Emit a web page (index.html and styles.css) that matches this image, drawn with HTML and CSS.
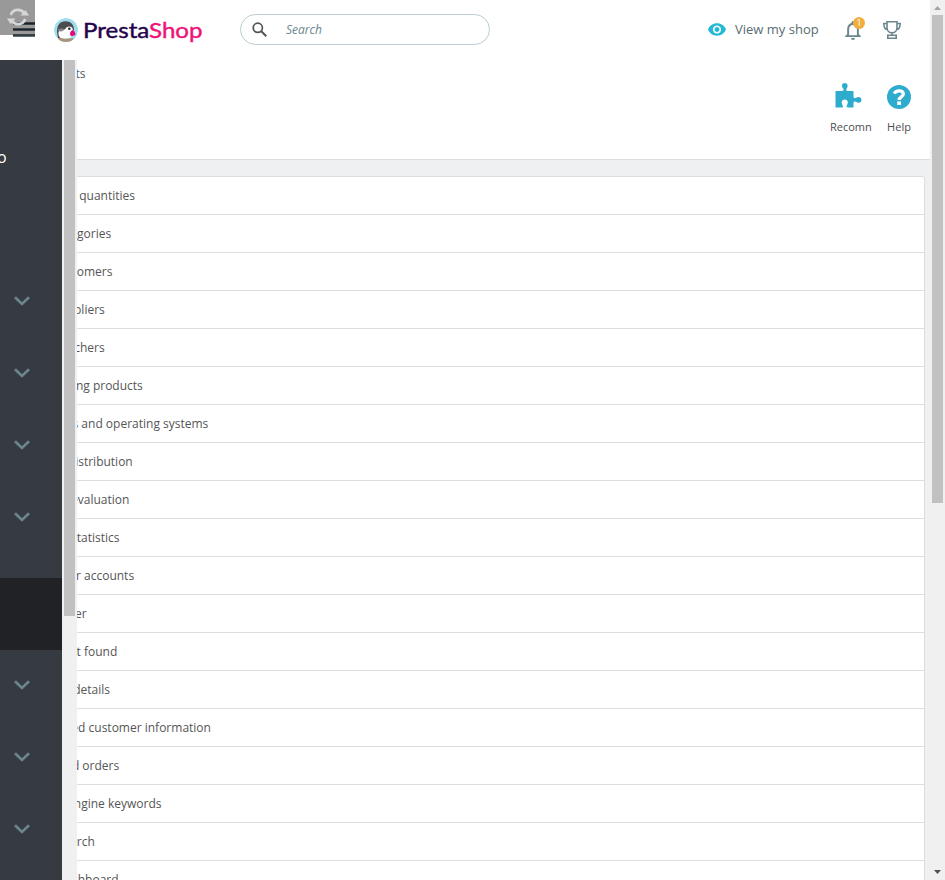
FILE: index.html
```html
<!DOCTYPE html>
<html lang="en">
<head>
<meta charset="utf-8">
<title>Stats • PrestaShop</title>
<link rel="stylesheet" href="styles.css">
</head>
<body>
<div class="viewport">
  <div class="page">
    <header class="topbar">
      <svg class="menu" viewBox="0 0 22 15"><path d="M0 1.500h22M0 7.500h22M0 13.500h22" stroke="#6c868e" stroke-width="3"/><path d="M0 1.500h22M0 7.500h22M0 13.500h22" stroke="#363a41" stroke-width="1.400"/></svg>
      <svg class="logo" viewBox="0 0 150 26">
        <defs><clipPath id="disc"><circle cx="12" cy="12" r="12"/></clipPath></defs>
        <g clip-path="url(#disc)">
          <circle cx="12" cy="12" r="12" fill="#9fdcec"/>
          <path d="M3 14C3 7 6 3.300 11.500 3.300c5 0 8.500 3 8.500 8.700l-3 3-8 6-5-1z" fill="#4b4b50"/>
          <path d="M4.500 14c1-2.500 4-3 6.500-2.500 1-2.500 4.500-4 7-2 1 1 1 3 .5 4.500l-2 6-8 1c-3-1-4.500-3.500-4-7z" fill="#fff"/>
          <path d="M4 11.500c2-1 4-1.500 6.500-.5-.5 2-2.500 2.800-6 2.300z" fill="#88888c"/>
          <circle cx="15.300" cy="10.800" r="1.300" fill="#2b2b30"/>
          <path d="M18.300 12c2 .8 3.200 2.500 3.200 5-1.500 0-2.500 1.300-4.500 1-1.700-1.500-1-4.500 1.300-6z" fill="#e5087e"/>
          <path d="M4 20.500c3-1.500 6 .5 8 .3 2 .2 5-1.300 8-.3l-3 5H6z" fill="#a9937c"/>
        </g>
        <text class="logo-text" x="29" y="19.500" textLength="119.500" lengthAdjust="spacingAndGlyphs"><tspan fill="#26044d" stroke="#26044d">Presta</tspan><tspan fill="#ee1477" stroke="#ee1477">Shop</tspan></text>
      </svg>
      <div class="search">
        <svg class="search-icon" viewBox="0 0 16 16"><circle cx="5.800" cy="5.800" r="4.600" fill="none" stroke="#555" stroke-width="1.700"/><path d="M9.300 9.300l5 5" stroke="#555" stroke-width="2"/></svg>
        <span>Search</span>
      </div>
      <div class="view-shop">
        <svg class="eye" viewBox="1 4.500 22 15"><path fill="#25b9d7" d="M12 4.500C7 4.500 2.730 7.610 1 12c1.730 4.390 6 7.500 11 7.500s9.270-3.110 11-7.500c-1.730-4.390-6-7.500-11-7.500zM12 17c-2.760 0-5-2.240-5-5s2.240-5 5-5 5 2.240 5 5-2.240 5-5 5zm0-8c-1.660 0-3 1.340-3 3s1.340 3 3 3 3-1.340 3-3-1.340-3-3-3z"/></svg>
        <span>View my shop</span>
      </div>
      <div class="bell">
        <svg viewBox="4 2.500 16 19.500"><path fill="#6c868e" d="M12 22c1.100 0 2-.9 2-2h-4c0 1.100.9 2 2 2zm6-6v-5c0-3.070-1.630-5.640-4.500-6.320V4c0-.83-.67-1.500-1.500-1.500s-1.500.67-1.500 1.500v.68C7.640 5.360 6 7.920 6 11v5l-2 2v1h16v-1l-2-2zm-2 1H8v-6c0-2.480 1.510-4.500 4-4.500s4 2.020 4 4.500v6z"/></svg>
        <span class="badge">1</span>
      </div>
      <svg class="trophy" viewBox="0 0 18 18" fill="none" stroke="#6c868e" stroke-width="1.600"><path d="M4 .8h10v6c0 3-2.200 5-5 5s-5-2-5-5zM4 2.500H.8C.8 6 2.500 8.500 5 8.700M14 2.500h3.200c0 3.500-1.700 6-4.200 6.200M9 11.500v2.500M4.800 14.300h8.400v2.900H4.800z"/></svg>
      <div class="reload"><svg viewBox="0 0 22 18" fill="none" stroke="#d6d6d6" stroke-width="2.600"><path d="M3.800 7C4.800 4 7.500 1.900 11 1.900c2.600 0 4.800 1.200 6.200 3.300M18.200 11c-1 3-3.700 5.100-7.200 5.100-2.600 0-4.800-1.200-6.200-3.300"/><path d="M13.500 7.500H22l-3.500-5.500zM0 10.500h8.500L3.500 16z" fill="#d6d6d6" stroke="none"/></svg></div>
    </header>
    <section class="page-head">
      <div class="crumb"><span>Stats</span></div>
      <div class="actions">
        <div class="action recommended"><svg class="puzzle" viewBox="0 0 26 25"><path fill="#2eacce" d="M0 8h6c2 0 2.500-.8 1.800-2.200C5.500 3 6.500 0 9.300 0s3.800 3 1.800 5.800C10.300 7.400 11 8 12.500 8H18v5.500c0 1.500 1 2.200 2.500 1.300C23 13 26 14 26 16.800s-3 3.800-5.500 2C19 18 18 18.500 18 20v4.500h-5.500c-1.500 0-1.800-1-1-2.300 1.500-2.500 1-5.700-2.200-5.700s-3.700 3.200-2.200 5.700c.8 1.400.4 2.300-1.100 2.300H0z"/></svg><span>Recomn</span></div>
        <div class="action"><svg class="help" viewBox="0 0 24 24"><circle cx="12" cy="12" r="12" fill="#2eacce"/><path d="M7.300 8.600C8.200 6.700 9.800 5.900 12 5.900c2.700 0 4.300 1.200 4.300 3.100 0 3-4.200 2.700-4.200 6" fill="none" stroke="#fff" stroke-width="3.300"/><path d="M10.200 16.400h3.800V20h-3.800z" fill="#fff"/></svg><span>Help</span></div>
      </div>
    </section>
    <main class="content">
      <ul class="modules">
        <li>Available quantities</li>
        <li>Best categories</li>
        <li>Best customers</li>
        <li>Best suppliers</li>
        <li>Best vouchers</li>
        <li>Best-selling products</li>
        <li>Browsers and operating systems</li>
        <li>Carrier distribution</li>
        <li>Catalog evaluation</li>
        <li>Catalog statistics</li>
        <li>Customer accounts</li>
        <li>Newsletter</li>
        <li>Pages not found</li>
        <li>Product details</li>
        <li>Registered customer information</li>
        <li>Sales and orders</li>
        <li>Search engine keywords</li>
        <li>Shop search</li>
        <li>Stats Dashboard</li>
      </ul>
    </main>
  </div>
  <aside class="drawer">
    <nav class="nav">
      <div class="shop-name">o</div>
      <div class="item"><svg class="chev" viewBox="0 0 16 10"><path d="M1 1.300l7 6.700 7-6.700"/></svg></div>
      <div class="item"><svg class="chev" viewBox="0 0 16 10"><path d="M1 1.300l7 6.700 7-6.700"/></svg></div>
      <div class="item"><svg class="chev" viewBox="0 0 16 10"><path d="M1 1.300l7 6.700 7-6.700"/></svg></div>
      <div class="item"><svg class="chev" viewBox="0 0 16 10"><path d="M1 1.300l7 6.700 7-6.700"/></svg></div>
      <div class="item current"></div>
      <div class="item"><svg class="chev" viewBox="0 0 16 10"><path d="M1 1.300l7 6.700 7-6.700"/></svg></div>
      <div class="item"><svg class="chev" viewBox="0 0 16 10"><path d="M1 1.300l7 6.700 7-6.700"/></svg></div>
      <div class="item"><svg class="chev" viewBox="0 0 16 10"><path d="M1 1.300l7 6.700 7-6.700"/></svg></div>
    </nav>
    <div class="drawer-scroll"><div class="drawer-thumb"></div></div>
  </aside>
  <div class="scrollbar">
    <svg viewBox="0 0 15 15"><path d="M4 10l3.500-4 3.500 4z" fill="#a3a3a3"/></svg>
    <div class="thumb"></div>
    <svg class="down" viewBox="0 0 15 15"><path d="M4 5h7l-3.500 4z" fill="#505050"/></svg>
  </div>
</div>
</body>
</html>
```
FILE: styles.css
```css
* { box-sizing: border-box; }
body { margin: 0; font-family: "Open Sans", sans-serif; font-size: 12px; color: #555; }
svg { display: block; flex: none; }
.viewport { position: relative; display: flex; width: 945px; height: 880px; overflow: hidden; background: #eff0f2; }
.page { width: 930px; height: 880px; overflow: hidden; }

.topbar { position: relative; display: flex; height: 60px; background: #fff; padding-left: 13px; align-items: flex-start; }
.menu { width: 22px; height: 15px; margin-top: 22px; }
.logo { width: 150px; height: 26px; margin: 18px 0 0 19px; overflow: visible; }
.logo-text { font-family: Lato, sans-serif; font-weight: 400; font-size: 22px; stroke-width: .45px; }
.search { display: flex; align-items: center; width: 250px; height: 31px; margin: 14px 0 0 36px; padding-left: 11px; border: 1px solid #bbcdd2; border-radius: 16px; color: #6c868e; font-style: italic; }
.search-icon { width: 16px; height: 16px; margin-right: 18px; }
.view-shop { display: flex; align-items: center; width: 111px; margin: 19px 0 0 218px; height: 20px; font-size: 13px; color: #576c72; white-space: nowrap; }
.eye { width: 18px; height: 13px; margin-right: 9px; }
.bell { position: relative; width: 16px; margin: 21px 0 0 26px; }
.bell svg { width: 16px; height: 19px; }
.badge { position: absolute; left: 8px; top: -4px; width: 12px; height: 12px; border-radius: 6px; background: #f1ae3c; color: #fff; font-size: 9px; line-height: 12px; text-align: center; }
.trophy { width: 18px; height: 18px; margin: 21px 0 0 22px; }
.reload { position: absolute; left: 0; top: 0; width: 35px; height: 35px; background: rgba(0, 0, 0, .4); }
.reload svg { width: 22px; height: 18px; margin: 8px 0 0 7px; }

.page-head { display: flex; justify-content: space-between; height: 100px; background: #fff; border-bottom: 1px solid #dddee0; padding-right: 19px; }
.crumb { padding: 5px 0 0 58px; line-height: 18px; }
.actions { display: flex; gap: 15px; padding-top: 23px; color: #4d4d4f; font-size: 11px; }
.action { display: flex; flex-direction: column; align-items: center; }
.action span { line-height: 16px; }
.puzzle { width: 27px; height: 25px; margin-bottom: 11px; }
.recommended { width: 42px; overflow: hidden; align-items: flex-start; }
.recommended .puzzle { margin-left: 5px; }
.help { width: 24px; height: 24px; margin: 2px 0 10px; }

.content { padding: 16px 5px 0 0; }
.modules { margin: 0; padding: 0; list-style: none; background: #fff; border: 1px solid #dddee0; border-radius: 3px; }
.modules li { height: 38px; padding-left: 25px; line-height: 37px; border-bottom: 1px solid #dddee0; white-space: nowrap; }

.drawer { position: absolute; left: 0; top: 60px; display: flex; width: 77px; height: 820px; }
.nav { width: 62px; background: #363a41; }
.shop-name { height: 205px; padding-top: 86px; color: #fff; font-size: 16px; line-height: 22px; text-indent: -3px; }
.item { display: flex; align-items: center; height: 72px; padding-left: 14px; }
.item:nth-child(5) { height: 97px; padding-bottom: 25px; }
.item.current { height: 72px; background: #202226; }
.item.current ~ .item { padding-bottom: 2px; }
.chev { width: 16px; height: 10px; fill: none; stroke: #6c868e; stroke-width: 2.6; }
.drawer-scroll { width: 15px; background: #f0f0f0; padding: 0 2px; }
.drawer-thumb { height: 556px; background: #c1c1c1; }

.scrollbar { display: flex; flex-direction: column; width: 15px; background: #f0f0f0; }
.scrollbar svg { width: 15px; height: 15px; }
.thumb { height: 488px; margin: 0 2px; background: #c1c1c1; }
.down { margin-top: auto; }
```
